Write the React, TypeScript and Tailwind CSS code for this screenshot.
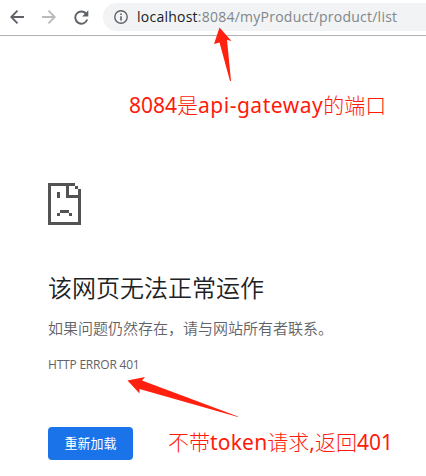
const cjk = "font-['Noto_Sans','Noto_Sans_CJK_SC',sans-serif]";

function BackIcon({ className }: { className: string }) {
  return (
    <svg className={className} width="14" height="14" viewBox="0 0 14 14" fill="none" stroke="currentColor" strokeWidth="1.9">
      <path d="M14 7H1.5M7.5 .7L1.3 7l6.2 6.3" />
    </svg>
  );
}

function Toolbar() {
  return (
    <header className="flex h-9 shrink-0 items-start border-b border-[#b0b1b3] pt-[3px]">
      <div className="flex h-7 w-[103px] shrink-0 items-center pl-[10px]">
        <BackIcon className="text-[#5f6368]" />
        <BackIcon className="ml-[18px] rotate-180 text-[#b9bbbd]" />
        <svg className="ml-[18px] text-[#5f6368]" width="15" height="15" viewBox="0 0 15 15">
          <path d="M12.4 4.1A6.1 6.1 0 1 0 13.2 9.5" fill="none" stroke="currentColor" strokeWidth="1.9" />
          <path d="M14.3 .2V6.4H8.1z" fill="currentColor" />
        </svg>
      </div>
      <div className="flex h-7 flex-1 items-center rounded-l-full bg-[#f1f3f4] pl-[11px]">
        <svg className="shrink-0 text-[#5f6368]" width="14" height="14" viewBox="0 0 14 14">
          <circle cx="7" cy="7" r="6.2" fill="none" stroke="currentColor" strokeWidth="1.4" />
          <path d="M6.2 6.2h1.6v4.3H6.2zM6.2 3.5h1.6v1.6H6.2z" fill="currentColor" />
        </svg>
        <span className="ml-[9px] whitespace-nowrap font-['Open_Sans',sans-serif] text-[14px] leading-7 tracking-[0.24px] text-[#80868b]">
          <span className="text-[#202124]">localhost</span>:8084/myProduct/product/list
        </span>
      </div>
    </header>
  );
}

function SadPage() {
  return (
    <svg width="33" height="42" viewBox="0 0 11 14" shapeRendering="crispEdges" fill="#535353">
      <path d="M0 0h9v1H7v3h4v1H6V1H1v12h9V5h1v9H0zM9 1h1v1H9zM10 2h1v3h-1zM3 3h1v2H3zM4 9h3v1H4zM3 10h1v1H3zM7 10h1v1H7z" />
    </svg>
  );
}

export default function App() {
  return (
    <div className={`relative flex h-[476px] w-[426px] flex-col overflow-hidden bg-white ${cjk}`}>
      <Toolbar />
      <main className="flex flex-col items-start pl-12 pt-[147px]">
        <SadPage />
        <h1 className="mt-[46px] whitespace-nowrap text-[24px] font-[350] leading-[34px] text-[#202124]">该网页无法正常运作</h1>
        <p className="mt-[12px] whitespace-nowrap text-[15px] font-[350] leading-[22px] text-[#5f6368]">如果问题仍然存在，请与网站所有者联系。</p>
        <div className="mt-[17px] whitespace-nowrap font-['Open_Sans',sans-serif] text-[12px] leading-[18px] tracking-[-0.2px] text-[#5f6368]">HTTP ERROR 401</div>
        <button className="mt-[53px] h-[33px] w-[85px] rounded-[4px] bg-[#1a73e8] text-[13px] leading-[33px] text-white">重新加载</button>
      </main>
      <div className="absolute left-[129px] top-[90px] whitespace-nowrap text-[21px] font-light leading-[30px] text-[#ff1a0a]">
        <span className="font-normal">8084</span>是<span className="font-normal tracking-[0.5px]">api-gateway</span>的端口
      </div>
      <div className="absolute left-[168px] top-[427px] whitespace-nowrap text-[21px] font-light leading-[30px] text-[#ff1a0a]">
        不带<span className="font-normal tracking-[0.2px]">token</span>请求<span className="font-normal">,</span>返回<span className="font-normal">401</span>
      </div>
      <svg className="pointer-events-none absolute inset-0" width="426" height="476" fill="#ff2010">
        <path d="M219.5 27.5L231.5 41L227 39.8L231 81H230L219.5 42.5L214 44z" />
        <path d="M127.5 380.5L145 377L142 380.5L238 416.5V417L139.5 389L139.5 393.5z" />
      </svg>
    </div>
  );
}
